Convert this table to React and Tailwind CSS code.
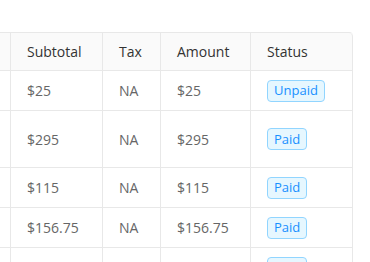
import React from "react";

const rows = [
  { sub: "$25", tax: "NA", amt: "$25", status: "Unpaid", h: "h-[40px]" },
  { sub: "$295", tax: "NA", amt: "$295", status: "Paid", h: "h-[57px]" },
  { sub: "$115", tax: "NA", amt: "$115", status: "Paid", h: "h-[40px]" },
  { sub: "$156.75", tax: "NA", amt: "$156.75", status: "Paid", h: "h-[40px]" },
  { sub: "", tax: "", amt: "", status: "Paid", h: "h-[40px]" },
];

function Badge({ children }) {
  return (
    <span className="inline-flex h-[22px] items-center rounded-[4px] border border-[#91d5ff] bg-[#e6f7ff] px-[6px] text-[13px] leading-none text-[#1890ff]">
      {children}
    </span>
  );
}

export default function App() {
  const cell = "flex items-center border-r border-b border-[#e8e8e8] pl-4";
  return (
    <div className="h-[262px] w-[370px] overflow-hidden bg-white font-['Open_Sans',sans-serif] text-[14px]">
      <div className="mt-[32px] w-[353px] rounded-tr-[4px] border-t border-[#e8e8e8]">
        <div className="flex h-[38px] bg-[#fafafa] text-[#333]">
          <div className="w-[11px] shrink-0 border-r border-b border-[#e8e8e8]" />
          <div className={`${cell} w-[92px]`}>Subtotal</div>
          <div className={`${cell} w-[58px]`}>Tax</div>
          <div className={`${cell} w-[90px]`}>Amount</div>
          <div className={`${cell} w-[102px] rounded-tr-[4px]`}>Status</div>
        </div>
        {rows.map((r, i) => (
          <div key={i} className={`flex ${r.h} text-[#666]`}>
            <div className="w-[11px] shrink-0 border-r border-b border-[#e8e8e8]" />
            <div className={`${cell} w-[92px]`}>{r.sub}</div>
            <div className={`${cell} w-[58px]`}>{r.tax}</div>
            <div className={`${cell} w-[90px]`}>{r.amt}</div>
            <div className={`${cell} w-[102px] ${i === 4 ? "items-start pt-[9px]" : ""}`}>
              <Badge>{r.status}</Badge>
            </div>
          </div>
        ))}
      </div>
    </div>
  );
}
